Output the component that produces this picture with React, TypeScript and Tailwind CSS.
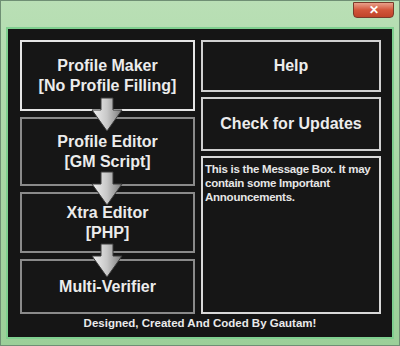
import React from "react";

const font = { fontFamily: '"Liberation Sans", Arial, sans-serif' };

const Arrow = ({ top }: { top: number }) => (
  <svg
    className="absolute left-[70px]"
    style={{ top }}
    width="34"
    height="36"
    viewBox="0 0 34 36"
  >
    <defs>
      <linearGradient id="ag" x1="0" y1="0" x2="1" y2="0">
        <stop offset="0" stopColor="#f2f2f2" />
        <stop offset="0.5" stopColor="#c8c8c8" />
        <stop offset="1" stopColor="#7a7a7a" />
      </linearGradient>
    </defs>
    <path
      d="M11 1 H23 V13 H32 L17 34 L2 13 H11 Z"
      fill="url(#ag)"
      stroke="#3a3a3a"
      strokeWidth="1"
      strokeLinejoin="round"
    />
  </svg>
);

const Box = ({
  children,
  className,
}: {
  children: React.ReactNode;
  className: string;
}) => (
  <div
    className={`flex flex-col items-center justify-center bg-[#161616] text-[16px] font-bold leading-[20px] text-[#ececec] ${className}`}
  >
    {children}
  </div>
);

export default function App() {
  return (
    <div
      className="flex h-[346px] w-[400px] flex-col border border-[#6f8f74] bg-gradient-to-b from-[#b9dfb5] via-[#a9d7a5] to-[#9ccf99]"
      style={font}
    >
      {/* title bar */}
      <div className="flex h-[26px] shrink-0 items-start justify-end pr-[5px] pt-[1px]">
        <div className="flex h-[16px] w-[41px] items-center justify-center rounded-b-[4px] border border-[#7a3a2a] bg-gradient-to-b from-[#e8a08a] via-[#d2553a] to-[#c0432a]">
          <span className="text-[12px] font-bold leading-none text-white">✕</span>
        </div>
      </div>

      {/* client area */}
      <div className="mx-[5px] flex h-[312px] flex-col border-2 border-[#7fcf8f] bg-[#151515]">
        <div className="flex gap-[6px] pl-[12px] pr-[10px] pt-[11px]">
          <div className="relative flex w-[175px] flex-col gap-[6px]">
            <Box className="h-[71px] border-2 border-[#e6e6e6]">
              <span>Profile Maker</span>
              <span>[No Profile Filling]</span>
            </Box>
            <Box className="h-[69px] border-2 border-[#8a8a8a]">
              <span>Profile Editor</span>
              <span>[GM Script]</span>
            </Box>
            <Box className="h-[61px] border-2 border-[#8a8a8a]">
              <span>Xtra Editor</span>
              <span>[PHP]</span>
            </Box>
            <Box className="h-[55px] border-2 border-[#8a8a8a]">
              <span>Multi-Verifier</span>
            </Box>
            <Arrow top={57} />
            <Arrow top={131} />
            <Arrow top={203} />
          </div>

          <div className="flex w-[180px] flex-col gap-[5px]">
            <Box className="h-[52px] border-2 border-[#d0d0d0]">
              <span>Help</span>
            </Box>
            <Box className="h-[54px] border-2 border-[#d0d0d0]">
              <span>Check for Updates</span>
            </Box>
            <div className="h-[158px] border-2 border-[#d8d8d8] bg-[#161616] px-[2px] pt-[4px] text-[11.5px] font-bold leading-[14px] tracking-[-0.25px] text-[#e6e6e6]">
              This is the Message Box. It may contain some Important
              Announcements.
            </div>
          </div>
        </div>

        <div className="mt-[2px] text-center text-[11.5px] font-bold leading-[14px] text-[#eaeaea]">
          Designed, Created And Coded By Gautam!
        </div>
      </div>
    </div>
  );
}
